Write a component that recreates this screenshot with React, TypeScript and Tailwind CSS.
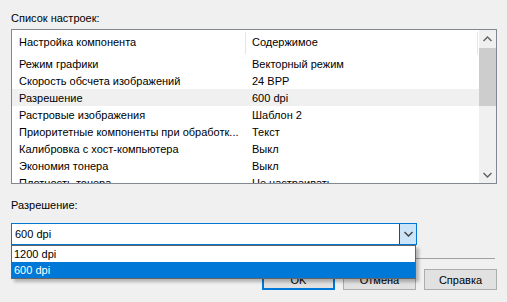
import React from "react"

// ── Data ──────────────────────────────────────────────────────────────────────

const ROWS = [
  { name: "Режим графики", value: "Векторный режим" },
  { name: "Скорость обсчета изображений", value: "24 BPP" },
  { name: "Разрешение", value: "600 dpi", selected: true },
  { name: "Растровые изображения", value: "Шаблон 2" },
  { name: "Приоритетные компоненты при обработк...", value: "Текст" },
  { name: "Калибровка с хост-компьютера", value: "Выкл" },
  { name: "Экономия тонера", value: "Выкл" },
  { name: "Плотность тонера", value: "Не настраивать" },
]

// ── Small chevrons ────────────────────────────────────────────────────────────

function Chevron({ dir = "down", color = "#606060" }: { dir?: "up" | "down"; color?: string }) {
  return (
    <svg width="9" height="6" viewBox="0 0 9 6" className="block">
      <path
        d={dir === "down" ? "M0.5 1 L4.5 5 L8.5 1" : "M0.5 5 L4.5 1 L8.5 5"}
        fill="none"
        stroke={color}
        strokeWidth="1.4"
      />
    </svg>
  )
}

// ── List view ─────────────────────────────────────────────────────────────────

function SettingsList() {
  return (
    <div className="mt-[3px] w-[486px] h-[155px] border border-[#828790] bg-white flex overflow-hidden">
      <div className="flex-1 flex flex-col overflow-hidden">
        {/* header */}
        <div className="h-[25px] shrink-0 flex items-center">
          <div className="w-[233px] h-full flex items-center pl-[7px] pb-[1px]">Настройка компонента</div>
          <div className="w-px h-[22px] self-end mb-[1px] bg-[#e5e5e5]" />
          <div className="w-[231px] h-full flex items-center pl-[6px] pb-[1px]">Содержимое</div>
          <div className="w-px h-[22px] self-end mb-[1px] bg-[#e5e5e5]" />
        </div>
        {ROWS.map(r => (
          <div key={r.name} className={`h-[17px] shrink-0 flex items-center ${r.selected ? "bg-[#f0f0f0]" : ""}`}>
            <div className="w-[234px] shrink-0 pl-[7px] whitespace-nowrap overflow-hidden">{r.name}</div>
            <div className="pl-[6px] whitespace-nowrap">{r.value}</div>
          </div>
        ))}
      </div>
      {/* scrollbar */}
      <div className="w-[17px] shrink-0 bg-[#f0f0f0] flex flex-col">
        <div className="h-[17px] flex items-center justify-center"><Chevron dir="up" /></div>
        <div className="flex-1 pt-[1px]">
          <div className="h-[58px] bg-[#cdcdcd]" />
        </div>
        <div className="h-[17px] flex items-center justify-center"><Chevron dir="down" /></div>
      </div>
    </div>
  )
}

// ── Combo box with open dropdown ──────────────────────────────────────────────

function ResolutionCombo() {
  return (
    <div className="relative mt-[10px] w-[406px]">
      <div className="h-[22px] border border-[#0078d7] bg-white flex">
        <div className="flex-1 flex items-center pl-[3px]">600 dpi</div>
        <div className="w-[17px] bg-[#cce4f7] border-l border-[#005499] flex items-center justify-center">
          <Chevron dir="down" color="#404040" />
        </div>
      </div>
      {/* dropdown */}
      <div className="absolute left-0 top-full w-[405px] border border-[#646464] bg-white z-10 shadow-[3px_3px_3px_rgba(0,0,0,0.25)]">
        <div className="h-[16px] flex items-center pl-[2px]">1200 dpi</div>
        <div className="h-[16px] flex items-center pl-[2px] bg-[#0078d7] text-white">600 dpi</div>
      </div>
    </div>
  )
}

// ── Buttons ───────────────────────────────────────────────────────────────────

function DlgButton({ children, primary }: { children: React.ReactNode; primary?: boolean }) {
  return (
    <div className={`w-[73px] h-[21px] bg-[#e1e1e1] flex items-center justify-center ${primary ? "border-2 border-[#0078d7]" : "border border-[#adadad]"}`}>
      {children}
    </div>
  )
}

export default function App() {
  return (
    <div
      className="w-[507px] h-[302px] bg-[#f0f0f0] text-black text-[11px] leading-[16px] overflow-hidden px-[11px] pt-[10px]"
      style={{ fontFamily: '"Liberation Sans", Arial, sans-serif' }}
    >
      <div>Список настроек:</div>
      <SettingsList />

      <div className="mt-[13px]">Разрешение:</div>
      <ResolutionCombo />

      <div className="mt-[13px] w-[484px] h-px bg-[#a0a0a0]" />

      <div className="mt-[10px] flex justify-end gap-[8px] w-[486px]">
        <DlgButton primary>OK</DlgButton>
        <DlgButton>Отмена</DlgButton>
        <DlgButton>Справка</DlgButton>
      </div>
    </div>
  )
}
